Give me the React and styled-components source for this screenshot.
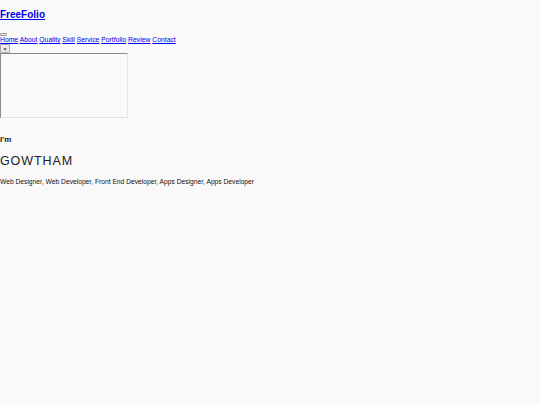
import React from "react";
import styled, { createGlobalStyle } from "styled-components";

const GlobalStyle = createGlobalStyle`
    html, body {
        margin: 0;
        padding: 0;
        background: #f9f9f9;
        font-family: "Liberation Sans", Arial, sans-serif;
        color: #111;
    }
`;

const links = ["Home", "About", "Quality", "Skill", "Service", "Portfolio", "Review", "Contact"];

export default function App() {
    return (
        <Page>
            <GlobalStyle />
            <Header>
                <Logo href="#">FreeFolio</Logo>
            </Header>
            <MenuToggle />
            <Nav>
                {links.map((l, i) => (
                    <React.Fragment key={l}>
                        <NavLink href="#">{l}</NavLink>{i < links.length - 1 ? " " : ""}
                    </React.Fragment>
                ))}
            </Nav>
            <CloseButton>×</CloseButton>
            <Frame />
            <Hero>
                <Intro>I'm</Intro>
                <Name>GOWTHAM</Name>
                <Roles>Web Designer, Web Developer, Front End Developer, Apps Designer, Apps Developer</Roles>
            </Hero>
        </Page>
    );
}

const Page = styled.div`
    width: 100%;
    min-height: 405px;
    display: flex;
    flex-direction: column;
    align-items: flex-start;
`;

const Header = styled.div`
    padding-top: 6px;
    height: 27px;
    line-height: 13px;
`;

const Logo = styled.a`
    color: #0000ee;
    font-size: 10px;
    font-weight: bold;
    text-decoration: underline;
`;

const MenuToggle = styled.button`
    width: 7px;
    height: 3px;
    padding: 0;
    border: 1px solid #999;
    background: #e9e9e9;
    border-radius: 1px;
`;

const Nav = styled.nav`
    font-size: 6.8px;
    line-height: 8px;
    white-space: nowrap;
`;

const NavLink = styled.a`
    color: #0000ee;
    text-decoration: underline;
`;

const CloseButton = styled.button`
    width: 10px;
    height: 9px;
    padding: 0;
    font-size: 6px;
    line-height: 6px;
    border: 1px solid #aaa;
    background: #ececec;
    border-radius: 1px;
    color: #000;
`;

const Frame = styled.div`
    width: 126px;
    height: 63px;
    border-top: 1px solid #8a8a8a;
    border-left: 1px solid #8a8a8a;
    border-right: 1px solid #e4e4e4;
    border-bottom: 1px solid #e4e4e4;
`;

const Hero = styled.section`
    padding-top: 17px;
`;

const Intro = styled.h3`
    margin: 0;
    font-size: 8px;
    font-weight: bold;
    line-height: 10px;
`;

const Name = styled.h1`
    margin: 9px 0 0;
    font-size: 12.5px;
    font-weight: normal;
    letter-spacing: 0.9px;
    line-height: 14px;
    color: #222;
`;

const Roles = styled.p`
    margin: 10px 0 0;
    font-size: 6.7px;
    line-height: 8px;
`;
